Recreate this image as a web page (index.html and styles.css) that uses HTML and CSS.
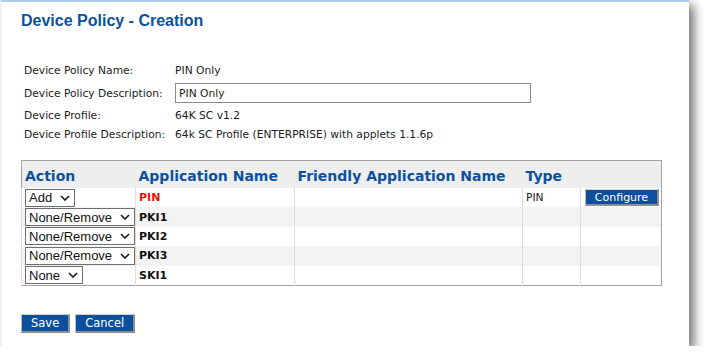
FILE: index.html
```html
<!DOCTYPE html>
<html lang="en">
<head>
    <meta charset="UTF-8">
    <title>Device Policy - Creation</title>
    <link rel="stylesheet" href="styles.css">
</head>
<body>
    <div class="panel">
        <h1 class="page-title">Device Policy - Creation</h1>

        <table class="info">
            <tr>
                <td class="info-label">Device Policy Name:</td>
                <td>PIN Only</td>
            </tr>
            <tr class="input-row">
                <td class="info-label">Device Policy Description:</td>
                <td><input type="text" class="text-input" value="PIN Only"></td>
            </tr>
            <tr>
                <td class="info-label">Device Profile:</td>
                <td>64K SC v1.2</td>
            </tr>
            <tr>
                <td class="info-label">Device Profile Description:</td>
                <td>64k SC Profile (ENTERPRISE) with applets 1.1.6p</td>
            </tr>
        </table>

        <table class="apps">
            <colgroup>
                <col class="col-action">
                <col class="col-name">
                <col class="col-friendly">
                <col class="col-type">
                <col class="col-extra">
            </colgroup>
            <tr>
                <th>Action</th>
                <th>Application Name</th>
                <th>Friendly Application Name</th>
                <th>Type</th>
                <th></th>
            </tr>
            <tr>
                <td><span class="picker"><select><option>Add</option></select><svg class="chevron" width="10" height="6" viewBox="0 0 10 6"><path d="M1 1 L5 5 L9 1" fill="none" stroke="#1a1a1a" stroke-width="1.6"/></svg></span></td>
                <td class="app-name app-required">PIN</td>
                <td></td>
                <td>PIN</td>
                <td><button class="btn btn-small">Configure</button></td>
            </tr>
            <tr>
                <td><span class="picker"><select><option>None/Remove</option></select><svg class="chevron" width="10" height="6" viewBox="0 0 10 6"><path d="M1 1 L5 5 L9 1" fill="none" stroke="#1a1a1a" stroke-width="1.6"/></svg></span></td>
                <td class="app-name">PKI1</td>
                <td></td>
                <td></td>
                <td></td>
            </tr>
            <tr>
                <td><span class="picker"><select><option>None/Remove</option></select><svg class="chevron" width="10" height="6" viewBox="0 0 10 6"><path d="M1 1 L5 5 L9 1" fill="none" stroke="#1a1a1a" stroke-width="1.6"/></svg></span></td>
                <td class="app-name">PKI2</td>
                <td></td>
                <td></td>
                <td></td>
            </tr>
            <tr>
                <td><span class="picker"><select><option>None/Remove</option></select><svg class="chevron" width="10" height="6" viewBox="0 0 10 6"><path d="M1 1 L5 5 L9 1" fill="none" stroke="#1a1a1a" stroke-width="1.6"/></svg></span></td>
                <td class="app-name">PKI3</td>
                <td></td>
                <td></td>
                <td></td>
            </tr>
            <tr>
                <td><span class="picker"><select><option>None</option></select><svg class="chevron" width="10" height="6" viewBox="0 0 10 6"><path d="M1 1 L5 5 L9 1" fill="none" stroke="#1a1a1a" stroke-width="1.6"/></svg></span></td>
                <td class="app-name">SKI1</td>
                <td></td>
                <td></td>
                <td></td>
            </tr>
        </table>

        <div class="actions">
            <button class="btn">Save</button>
            <button class="btn">Cancel</button>
        </div>
    </div>
</body>
</html>
```

FILE: styles.css
```css
:root {
    --brand-blue: #0b529e;
    --button-blue: #0c4f9d;
    --text-color: #1c1c1c;
    --font-family: "DejaVu Sans", Verdana, sans-serif;
}

body {
    margin: 0;
    background: #ffffff;
    font-family: var(--font-family);
    font-size: 10.7px;
    color: var(--text-color);
}

.panel {
    box-sizing: border-box;
    width: 689px;
    height: 346px;
    padding: 9px 0 0 19px;
    background: #ffffff;
    border-top: 2px solid #a9cdec;
    border-left: 2px solid #f1f1f1;
    box-shadow: 5px 5px 10px rgba(0, 0, 0, 0.55);
}

.page-title {
    margin: 0;
    font-family: "Liberation Sans", Arial, sans-serif;
    font-size: 16px;
    line-height: 20px;
    font-weight: bold;
    color: var(--brand-blue);
}

/* policy details */
.info {
    margin-top: 30px;
    margin-left: 1px;
    border-collapse: collapse;
}

.info td {
    height: 19px;
    padding: 0 2px;
    white-space: nowrap;
}

.info .info-label {
    padding-right: 8px;
}

.info .input-row td {
    height: 26px;
}

.text-input {
    box-sizing: border-box;
    width: 356px;
    height: 20px;
    margin: 0;
    padding: 0 3px;
    border: 1px solid #8a8a8a;
    font-family: var(--font-family);
    font-size: 10.7px;
    color: var(--text-color);
}

/* applications table */
.apps {
    margin-top: 16px;
    width: 640px;
    border: 1px solid #a3a3a3;
    border-collapse: collapse;
    table-layout: fixed;
}

.col-action { width: 114px; }
.col-name { width: 159px; }
.col-friendly { width: 228px; }
.col-type { width: 58px; }
.col-extra { width: 81px; }

.apps th {
    height: 24px;
    padding: 3px 3px 0;
    background: #eeeeee;
    text-align: left;
    font-size: 14px;
    font-weight: bold;
    color: var(--brand-blue);
    white-space: nowrap;
}

.apps td {
    height: 19.4px;
    padding: 0 3px;
    border-left: 1px solid #dedede;
    white-space: nowrap;
}

.apps tr:nth-child(odd) td {
    background: #f3f3f3;
}

.app-name {
    font-size: 11px;
    font-weight: bold;
    color: #111111;
}

.app-required {
    color: #e8140c;
}

.picker {
    position: relative;
    display: inline-block;
    vertical-align: middle;
}

.picker select {
    appearance: none;
    -webkit-appearance: none;
    height: 18px;
    margin: 0;
    padding: 0 21px 0 3px;
    border: 1px solid #6e6e6e;
    border-radius: 0;
    background: #ffffff;
    font-family: "Liberation Sans", Arial, sans-serif;
    font-size: 13px;
    color: #111111;
}

.chevron {
    position: absolute;
    right: 5px;
    top: 6px;
    pointer-events: none;
}

/* buttons */
.btn {
    height: 19px;
    margin: 0;
    padding: 0 9px;
    background: var(--button-blue);
    color: #ffffff;
    font-family: var(--font-family);
    font-size: 11.5px;
    border-style: solid;
    border-width: 1px 2px 2px 1px;
    border-color: #d2d2d2 #8e8e8e #8e8e8e #bcbcbc;
    cursor: pointer;
}

.btn-small {
    width: 74px;
    height: 17px;
    margin-left: 1px;
    padding: 0;
    font-size: 11px;
    vertical-align: middle;
}

.actions {
    display: flex;
    gap: 5px;
    margin-top: 28px;
}
```
